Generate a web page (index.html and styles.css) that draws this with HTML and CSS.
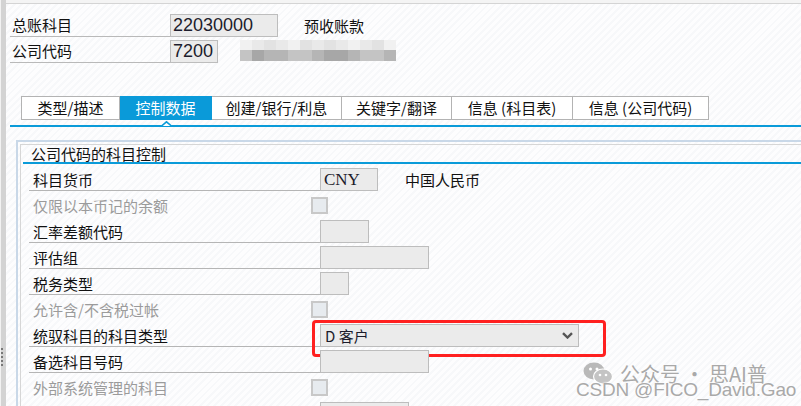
FILE: index.html
```html
<!DOCTYPE html>
<html lang="zh-CN">
<head>
    <meta charset="UTF-8">
    <title>总账科目 - 控制数据</title>
    <link rel="stylesheet" href="styles.css">
</head>
<body>
<div class="shell">
    <div class="splitter"><span class="grip"></span></div>
    <div class="content">
        <div class="topbar"></div>

        <div class="head">
            <div class="hrow">
                <span class="hlabel">总账科目</span>
                <span class="field f-acct">22030000</span>
                <span class="htext">预收账款</span>
            </div>
            <div class="hrow">
                <span class="hlabel">公司代码</span>
                <span class="field f-cc">7200</span>
                <!-- 公司名称打了马赛克 -->
                <span class="mosaic">
                    <i class="m1"></i><i class="m2"></i><i class="m3"></i><i class="m2"></i><i class="m1"></i><i class="m3"></i><i class="m2"></i><i class="m3"></i><i class="m2"></i><i class="m1"></i><i class="m2"></i><i class="m3"></i><i class="m1"></i>
                    <i class="m4"></i><i class="m6"></i><i class="m5"></i><i class="m5"></i><i class="m4"></i><i class="m4"></i><i class="m5"></i><i class="m6"></i><i class="m6"></i><i class="m5"></i><i class="m4"></i><i class="m4"></i><i class="m5"></i>
                </span>
            </div>
        </div>

        <nav class="tabs">
            <a class="tab t1" href="#">类型/描述</a>
            <a class="tab t2 active" href="#">控制数据</a>
            <a class="tab t3" href="#">创建/银行/利息</a>
            <a class="tab t4" href="#">关键字/翻译</a>
            <a class="tab t5" href="#">信息 (科目表)</a>
            <a class="tab t6" href="#">信息 (公司代码)</a>
        </nav>
        <div class="tabline">
            <svg class="caret" width="11" height="5" viewBox="0 0 11 5"><polyline points="0.5,5 5.5,0.8 10.5,5" fill="#fff" stroke="#0a9bd9" stroke-width="1.6"/></svg>
        </div>

        <section class="group">
            <div class="group-inner">
                <h1 class="group-title">公司代码的科目控制</h1>
                <div class="rows">
                    <div class="row">
                        <span class="label">科目货币</span>
                        <span class="field f-cur">CNY</span>
                        <span class="desc">中国人民币</span>
                    </div>
                    <div class="row">
                        <span class="label off">仅限以本币记的余额</span>
                        <span class="check"></span>
                    </div>
                    <div class="row">
                        <span class="label">汇率差额代码</span>
                        <span class="field w49"></span>
                    </div>
                    <div class="row">
                        <span class="label">评估组</span>
                        <span class="field w109"></span>
                    </div>
                    <div class="row">
                        <span class="label">税务类型</span>
                        <span class="field w29"></span>
                    </div>
                    <div class="row">
                        <span class="label off">允许含/不含税过帐</span>
                        <span class="check"></span>
                    </div>
                    <div class="row marked">
                        <span class="label">统驭科目的科目类型</span>
                        <span class="field select">
                            <span>D 客户</span>
                            <svg width="11" height="7" viewBox="0 0 11 7"><polyline points="1,1.2 5.5,5.5 10,1.2" fill="none" stroke="#555" stroke-width="2.4"/></svg>
                        </span>
                        <span class="redbox"></span>
                    </div>
                    <div class="row">
                        <span class="label">备选科目号码</span>
                        <span class="field w109"></span>
                    </div>
                    <div class="row">
                        <span class="label off">外部系统管理的科目</span>
                        <span class="check"></span>
                    </div>
                    <div class="row">
                        <span class="label"></span>
                        <span class="field w89"></span>
                    </div>
                </div>
            </div>
        </section>
    </div>
</div>

<div class="watermark">
    <div class="wm-top">
        <svg width="31" height="23" viewBox="0 0 31 23">
            <ellipse cx="11" cy="9" rx="10.5" ry="8.5" fill="#b9b9b9"/>
            <ellipse cx="20" cy="14.5" rx="9.5" ry="7.5" fill="#c4c4c4" stroke="#fff" stroke-width="1.2"/>
            <circle cx="7.5" cy="7" r="1.5" fill="#fff"/>
            <circle cx="14" cy="7" r="1.5" fill="#fff"/>
            <circle cx="17" cy="13" r="1.3" fill="#fff"/>
            <circle cx="23" cy="13" r="1.3" fill="#fff"/>
        </svg>
        <span>公众号 · 思AI普</span>
    </div>
    <div class="wm-bottom">CSDN @FICO_David.Gao</div>
</div>
</body>
</html>
```

FILE: styles.css
```css
*{
    margin: 0;
    padding: 0;
    box-sizing: border-box;
}
a{text-decoration: none; color: inherit;}

body{
    position: relative;
    width: 801px;
    height: 406px;
    overflow: hidden;
    font-family: "Noto Sans CJK SC", "Liberation Sans", sans-serif;
    font-size: 15px;
    color: #111;
    background: #fff;
}

.shell{
    display: flex;
    height: 406px;
}
.splitter{
    width: 6px;
    border-left: 1px solid #f2f2f2;
    background: #d3d3d3;
    padding-top: 348px;
}
.splitter > .grip{
    display: block;
    width: 2px;
    height: 18px;
    border-left: 2px dotted #777;
}
.content{
    flex: 1;
    /*浅色斜纹底*/
    background: repeating-linear-gradient(135deg, #fdfdfe 0 3px, #f7f8fa 3px 5px);
}
.topbar{
    height: 4px;
    background: #f4f4f4;
    border-bottom: 1px solid #d4d4d4;
}

/* 抬头两行 */
.head{
    display: flex;
    flex-direction: column;
    gap: 3px;
    padding: 10px 0 0 4px;
}
.hrow{
    display: flex;
    height: 23px;
}
.hlabel{
    width: 160px;
    padding-left: 2px;
    line-height: 22px;
    border-bottom: 1px solid #b9b9b9;
}
.field{
    display: block;
    height: 23px;
    border: 1px solid #bdbdbd;
    background: #ebebeb;
    font-family: "Liberation Sans", sans-serif;
    font-size: 18px;
    line-height: 21px;
    padding-left: 2px;
    color: #1c1c2c;
}
.f-acct{width: 108px;}
.f-cc{width: 48px;}
.htext{
    margin-left: 26px;
    line-height: 23px;
}
.mosaic{
    display: grid;
    grid-template-columns: repeat(13, 12px);
    grid-template-rows: 10px 11px;
    margin: 0 0 0 22px;
    align-self: flex-start;
}
.mosaic > i{display: block;}
.mosaic > .m1{background: #f1f1f1;}
.mosaic > .m2{background: #e9e9e9;}
.mosaic > .m3{background: #e2e2e2;}
.mosaic > .m4{background: #c4c4c4;}
.mosaic > .m5{background: #b5b5b5;}
.mosaic > .m6{background: #a7a7a7;}

/* 页签 */
.tabs{
    display: flex;
    width: fit-content;
    height: 24px;
    margin: 33px 0 0 15px;
    border: 1px solid #b3b3b3;
    background: #fff;
}
.tab{
    display: block;
    height: 22px;
    line-height: 22px;
    text-align: center;
    border-right: 1px solid #b3b3b3;
}
.tab:last-child{border-right: none;}
.t1{width: 98px;}
.t2{width: 92px;}
.t3{width: 130px;}
.t4{width: 110px;}
.t5{width: 121px;}
.t6{width: 135px;}
.tab.active{
    height: 24px;
    margin-top: -1px;
    line-height: 24px;
    background: #0a9ad9;
    color: #fff;
    border-right-color: #0a9ad9;
}
.tabline{
    position: relative;
    height: 2px;
    margin: 5px 0 0 4px;
    background: #0a9bd9;
}
.tabline > .caret{
    position: absolute;
    left: 151px;
    top: -4px;
}

/* 公司代码的科目控制 */
.group{
    margin: 13px 0 0 10px;
    padding: 2px 0 0 2px;
    border-top: 2px solid #c9d8e8;
    border-left: 2px solid #c9d8e8;
    height: 280px;
}
.group-inner{
    height: 100%;
    border-top: 1px solid #d6d6d6;
    border-left: 1px solid #d6d6d6;
}
.group-title{
    margin-left: 2px;
    padding-left: 8px;
    height: 19px;
    font-size: 15px;
    font-weight: normal;
    line-height: 17px;
    border-bottom: 2px solid #0a9bd9;
}
.rows{padding-top: 1px;}
.row{
    position: relative;
    display: flex;
    align-items: center;
    height: 23px;
    margin: 3px 0 0 8px;
}
.label{
    width: 291px;
    height: 23px;
    padding-left: 4px;
    line-height: 23px;
    border-bottom: 1px solid #b5b5b5;
}
.label.off{
    color: #9b9b9b;
    border-bottom-color: transparent;
}
.check{
    width: 17px;
    height: 17px;
    margin-left: -9px;
    border: 2px solid #c8c8c8;
    background: #e7ebef;
}
.f-cur{
    width: 58px;
    padding-left: 3px;
    font-family: "Liberation Serif", serif;
    font-size: 17px;
}
.desc{margin-left: 27px;}
.w29{width: 29px;}
.w49{width: 49px;}
.w89{width: 89px;}
.w109{width: 109px;}
.select{
    display: flex;
    align-items: center;
    justify-content: space-between;
    width: 259px;
    padding: 0 5px 0 4px;
    font-family: "Noto Sans CJK SC", sans-serif;
    font-size: 15px;
}
.redbox{
    position: absolute;
    left: 283px;
    top: -4px;
    width: 294px;
    height: 37px;
    border: 3px solid #ff2020;
    border-radius: 4px;
}

/* 水印 */
.watermark{
    position: absolute;
    left: 576px;
    top: 362px;
    color: #a9a9a9;
    text-shadow: 0 0 2px #fff, 0 0 2px #fff;
}
.wm-top{
    display: flex;
    align-items: center;
    margin-left: 7px;
    font-size: 20px;
    line-height: 22px;
}
.wm-top > svg{margin-right: 6px;}
.wm-bottom{
    margin-top: -5px;
    font-family: "Liberation Sans", sans-serif;
    font-size: 19px;
    line-height: 20px;
    letter-spacing: -0.2px;
}
```
